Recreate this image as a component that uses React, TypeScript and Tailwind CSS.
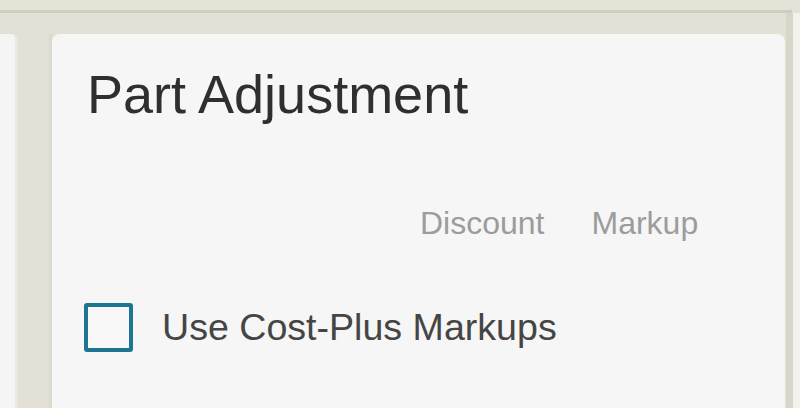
export default function App() {
    return (
        <div className="w-[800px] h-[408px] overflow-hidden flex flex-col bg-[#e3e1d5] font-['Liberation_Sans',Arial,sans-serif]">
            <div className="h-[10px] bg-[#e5e3d7]" />
            <div className="h-[3px] bg-[#cfcdc0] mr-[8px]" />
            <div className="flex flex-1 min-h-0">
                <div className="flex flex-1 pt-[21px]">
                    <div className="w-[15px] rounded-tr-[6px] bg-[#f5f5f5] border-r-[3px] border-[#e9e8e1] box-content" />
                    <div className="w-[31px] bg-[#e3e1d5]" />
                    <div className="w-[3px] bg-[#dcdace]" />
                    <div className="w-[733px] rounded-t-[8px] bg-[#f6f6f6] flex flex-col">
                        <h1 className="mt-[33px] ml-[35px] text-[54px] leading-none text-[#2f2f2f]">Part Adjustment</h1>
                        <div className="mt-[86px] ml-[368px] flex gap-[47px] text-[32px] leading-none text-[#9c9c9c]">
                            <span>Discount</span>
                            <span>Markup</span>
                        </div>
                        <label className="mt-[64px] ml-[32px] flex items-center gap-[29px]">
                            <span className="w-[49px] h-[49px] rounded-[3px] border-[4px] border-[#1d7593] bg-[#f8f8f8]" />
                            <span className="text-[37.6px] leading-none text-[#454545]">Use Cost-Plus Markups</span>
                        </label>
                    </div>
                    <div className="w-[1px]" />
                </div>
                <div className="w-[7px] bg-[#d8d6c9]" />
                <div className="w-[7px] bg-[#f2f1ec]" />
            </div>
        </div>
    )
}
